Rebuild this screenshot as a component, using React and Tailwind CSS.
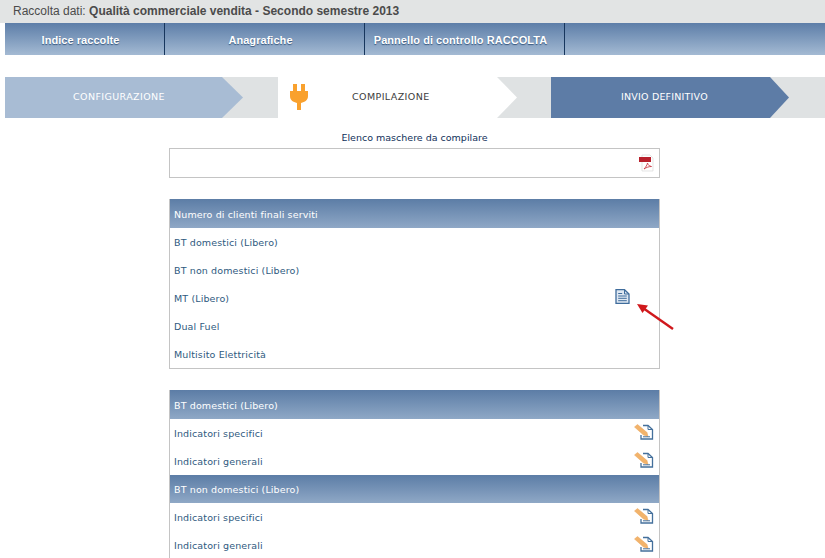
const font = { fontFamily: '"DejaVu Sans", sans-serif' };

function PlugIcon() {
  return (
    <svg width="20" height="28" viewBox="0 0 20 28">
      <path d="M4 1h4v7h4V1h4v7h3v5c0 4-3 6-7 7v7h-4v-7c-4-1-7-3-7-7V8h3z" fill="#f9a12e" />
    </svg>
  );
}

function PdfIcon() {
  return (
    <svg width="16" height="18" viewBox="0 0 16 18">
      <path d="M3 1h8l3 3v13H3z" fill="#fff" stroke="#d8d8d8" strokeWidth="0.700" />
      <rect x="0" y="3" width="12" height="5" fill="#b8202c" />
      <path d="M5 15c2-2 3-4 3.500-6 .5 2 1.500 3 4 3.500-2.500 0-5 .8-7.500 2.500z" fill="none" stroke="#c9404a" strokeWidth="0.900" />
    </svg>
  );
}

function DocIcon() {
  return (
    <svg width="15" height="15" viewBox="0 0 15 15">
      <path d="M1 .7h8.500L14 5v9.300H1z" fill="#dfe8f2" stroke="#3f6c9c" strokeWidth="1.300" />
      <path d="M9.500 1v4H14" fill="none" stroke="#3f6c9c" strokeWidth="1" />
      <path d="M3.200 4.500h4M3.200 7h8.600M3.200 9.300h8.600M3.200 11.700h8.600" stroke="#3f6c9c" strokeWidth="1" />
    </svg>
  );
}

function EditIcon() {
  return (
    <svg width="20" height="16" viewBox="0 0 20 16">
      <path d="M9 1.500h5l4.500 4v9.500H7V11" fill="#fff" stroke="#44709c" strokeWidth="1.300" />
      <path d="M14 1.500v4h4.500" fill="none" stroke="#44709c" strokeWidth="1" />
      <path d="M0.500 3L3.500 .5 13 8.500l1 4-4.500-1.500z" fill="#f2b36b" stroke="#eba559" strokeWidth="0.500" />
      <path d="M9 12.800h7" stroke="#44709c" strokeWidth="1" />
    </svg>
  );
}

function ArrowMark() {
  return (
    <svg className="absolute left-[634px] top-[302px]" width="42" height="30" viewBox="0 0 42 30">
      <path d="M39 27L9 6" stroke="#d0181c" strokeWidth="2.400" />
      <path d="M3 2l11 1.500-5.500 7.500z" fill="#d0181c" />
    </svg>
  );
}

function NavItem({ label, className }) {
  return (
    <div className={`flex items-center justify-center border-r border-[#17365d] pr-[8px] pt-[2px] text-[11px] font-bold tracking-[0.05px] text-white [text-shadow:0_1px_1px_#34557d] ${className}`} style={{ fontFamily: '"Liberation Sans", sans-serif' }}>
      {label}
    </div>
  );
}

function SectionHead({ label, className = 'h-[29px]' }) {
  return (
    <div className={`flex items-center bg-gradient-to-b from-[#5c7da6] to-[#8fa8c6] pl-[4px] pt-[2px] text-[9.500px] tracking-[0.13px] text-white ${className}`} style={font}>
      {label}
    </div>
  );
}

function Row({ label, children }) {
  return (
    <div className="relative flex h-7 items-center pl-[4px] pt-[2px] text-[9.500px] tracking-[0.13px] text-[#2f5a80]" style={font}>
      {label}
      {children}
    </div>
  );
}

export default function App() {
  return (
    <div className="relative h-[558px] w-[825px] overflow-hidden bg-white">
      {/* title bar */}
      <div className="flex h-[23px] items-center bg-[#e2e4e4] pb-[2px] pl-[13px] text-[12px] text-[#4b4b4b]" style={{ fontFamily: '"Liberation Sans", sans-serif' }}>
        Raccolta dati:&nbsp;<span className="font-bold">Qualità commerciale vendita - Secondo semestre 2013</span>
      </div>

      {/* main nav */}
      <div className="ml-[5px] flex h-8 bg-gradient-to-b from-[#5d7ea8] to-[#a4bad3]">
        <NavItem label="Indice raccolte" className="w-[160px]" />
        <NavItem label="Anagrafiche" className="w-[200px]" />
        <NavItem label="Pannello di controllo RACCOLTA" className="w-[200px]" />
      </div>

      {/* steps */}
      <div className="ml-[5px] mt-[22px] flex h-[41px] bg-[#dfe2e3] text-[9.500px] tracking-[0.4px]" style={font}>
        <div className="flex w-[238px] items-center bg-[#a8bcd4] pl-[68px] text-white [clip-path:polygon(0_0,217px_0,100%_50%,217px_100%,0_100%)]">
          CONFIGURAZIONE
        </div>
        <div className="ml-[35px] flex w-[239px] items-center bg-white text-[#3c3c3c] [clip-path:polygon(0_0,219px_0,100%_50%,219px_100%,0_100%)]">
          <span className="ml-[11px] mt-[-1px]"><PlugIcon /></span>
          <span className="ml-[43px]">COMPILAZIONE</span>
        </div>
        <div className="ml-[34px] flex w-[238px] items-center bg-[#5d7ca6] pl-[70px] tracking-[0.2px] text-white [clip-path:polygon(0_0,219px_0,100%_50%,219px_100%,0_100%)]">
          INVIO DEFINITIVO
        </div>
      </div>

      {/* content */}
      <div className="ml-[169px] w-[491px]">
        <div className="mt-[13px] text-center text-[9.500px] text-[#10305a]" style={font}>
          Elenco maschere da compilare
        </div>
        <div className="mt-[3px] flex h-[30px] items-center justify-end border border-[#c4c4c4] pr-[4px]">
          <PdfIcon />
        </div>

        <div className="mt-[21px] border-x border-b border-[#c4c4c4]">
          <SectionHead label="Numero di clienti finali serviti" />
          <Row label="BT domestici (Libero)" />
          <Row label="BT non domestici (Libero)" />
          <Row label="MT (Libero)">
            <span className="absolute left-[445px] top-[5px]"><DocIcon /></span>
          </Row>
          <Row label="Dual Fuel" />
          <Row label="Multisito Elettricità" />
        </div>

        <div className="mt-[21px] border-x border-[#c4c4c4]">
          <SectionHead label="BT domestici (Libero)" />
          <Row label="Indicatori specifici">
            <span className="absolute left-[464px] top-[5px]"><EditIcon /></span>
          </Row>
          <Row label="Indicatori generali">
            <span className="absolute left-[464px] top-[5px]"><EditIcon /></span>
          </Row>
          <SectionHead label="BT non domestici (Libero)" className="h-7" />
          <Row label="Indicatori specifici">
            <span className="absolute left-[464px] top-[5px]"><EditIcon /></span>
          </Row>
          <Row label="Indicatori generali">
            <span className="absolute left-[464px] top-[5px]"><EditIcon /></span>
          </Row>
        </div>
      </div>

      <ArrowMark />
    </div>
  );
}
